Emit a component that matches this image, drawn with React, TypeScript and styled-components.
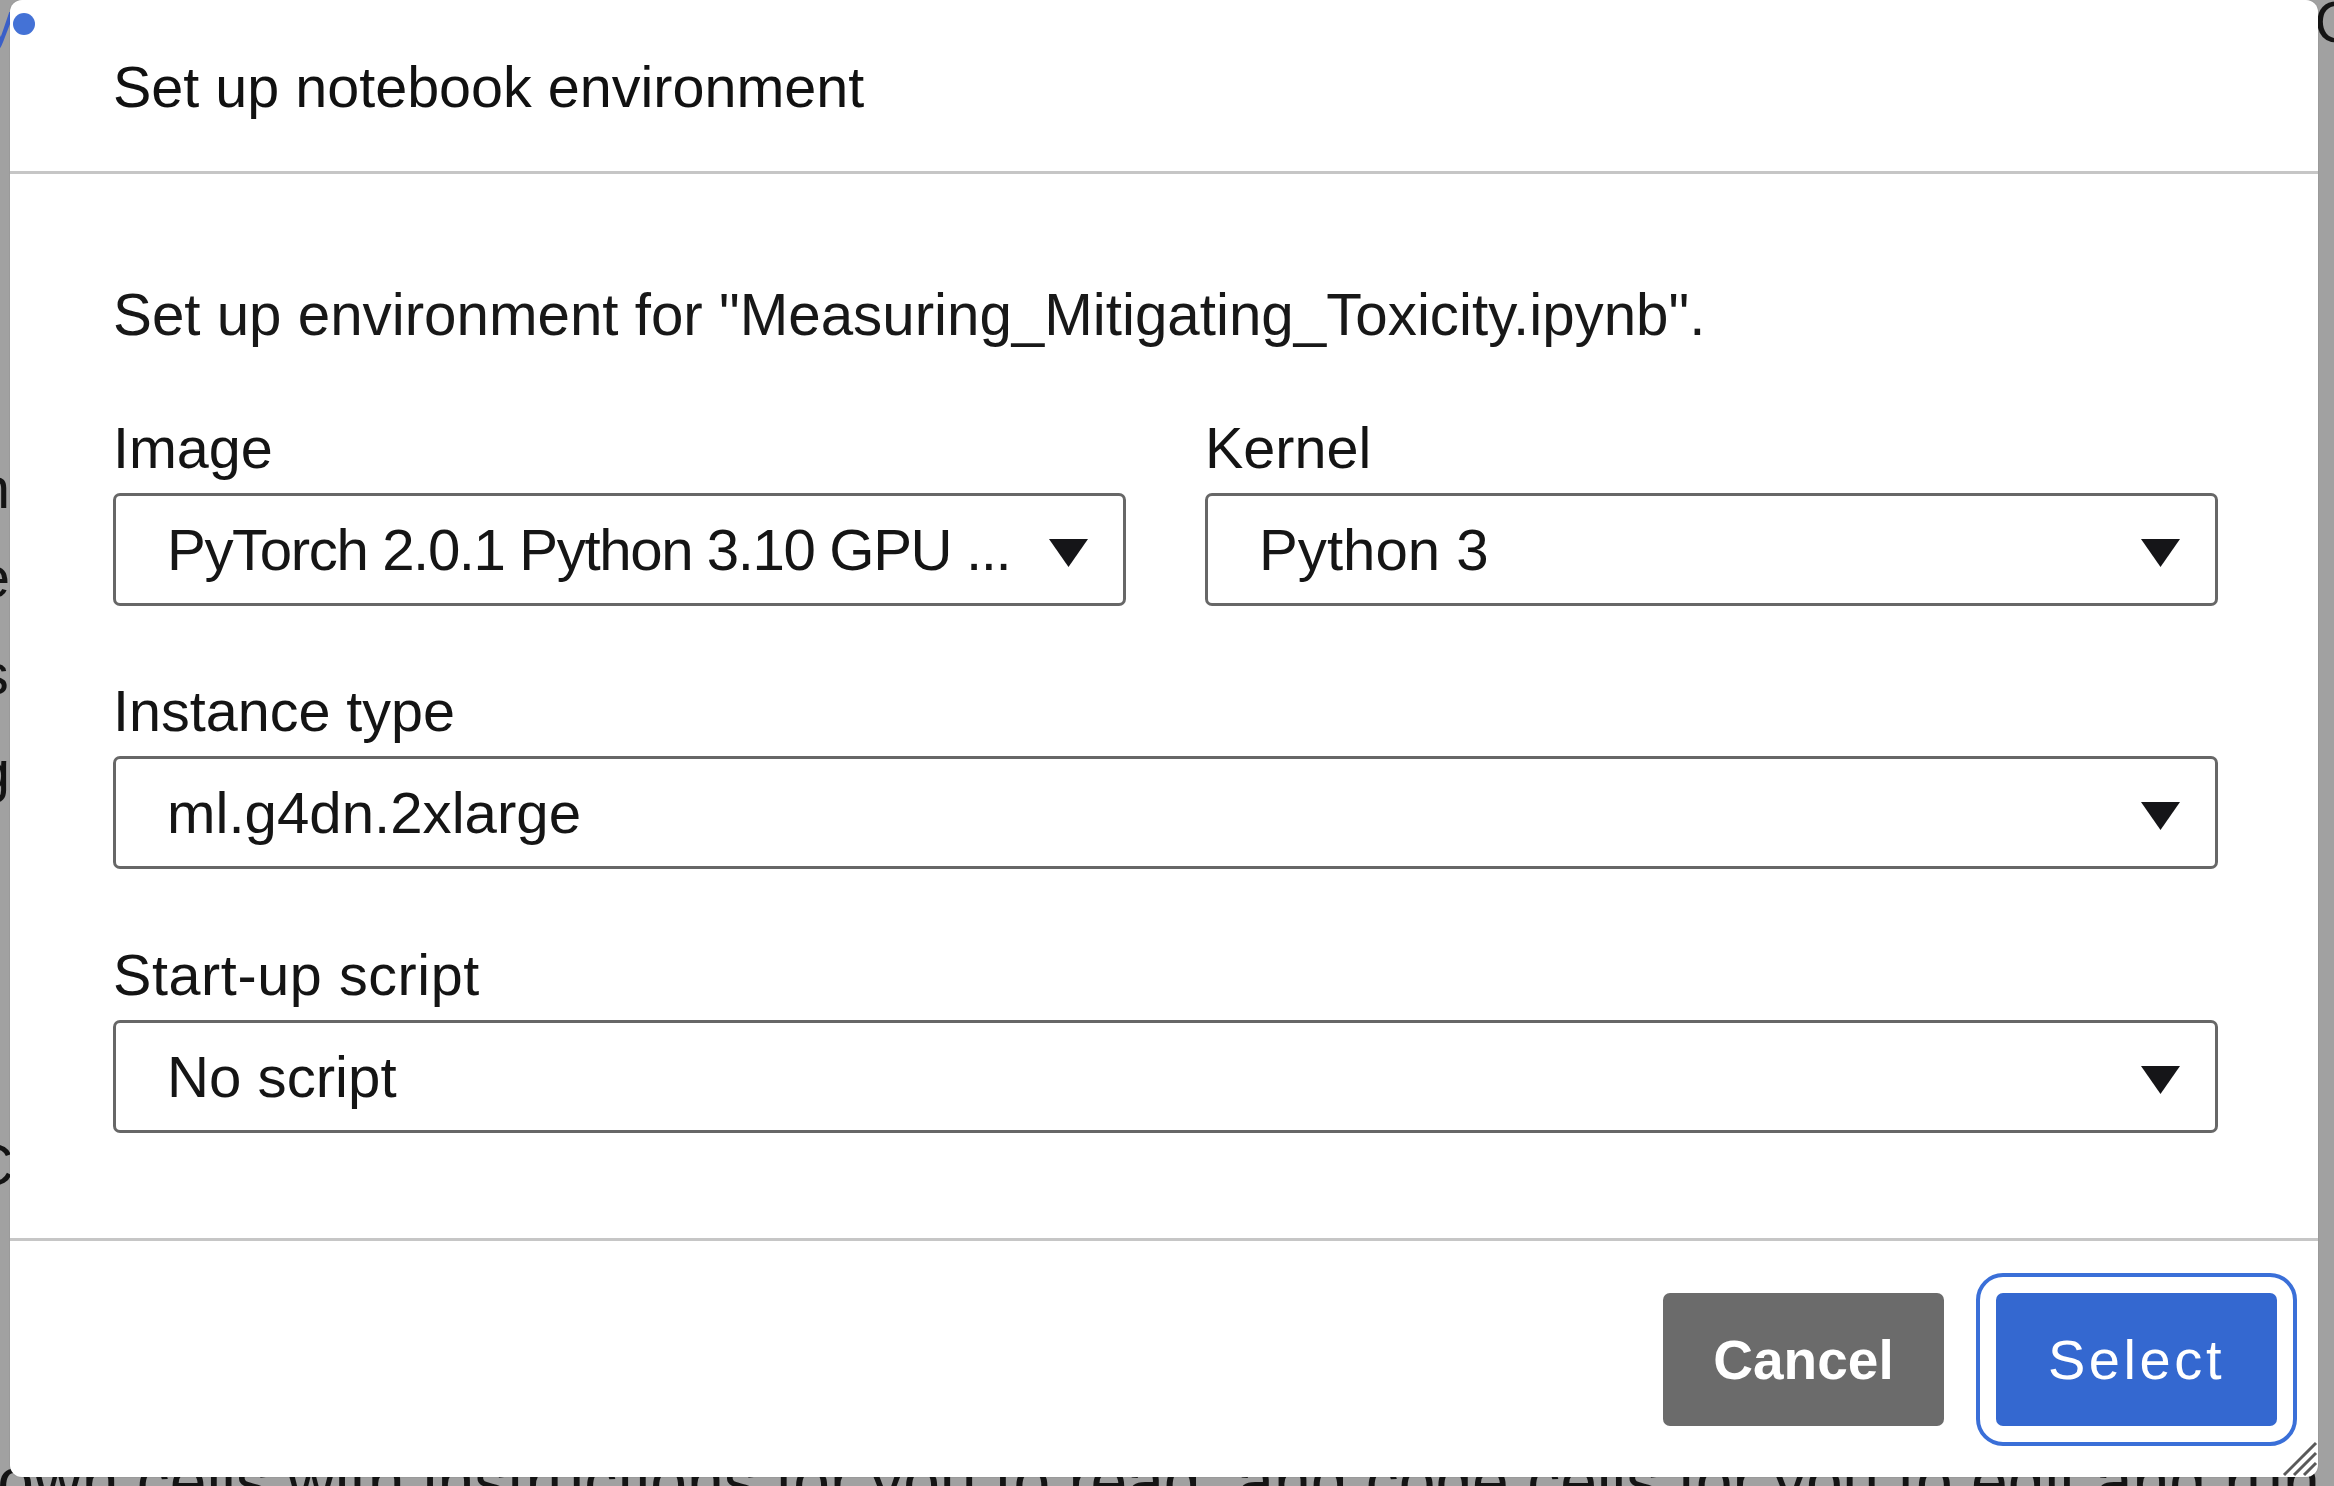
import React from "react";
import styled, { createGlobalStyle } from "styled-components";

const Global = createGlobalStyle`
  *, *::before, *::after { box-sizing: border-box; }
  html, body { margin: 0; padding: 0; overflow: hidden; }
  body { font-family: "Liberation Sans", Arial, "Noto Sans", sans-serif; }
`;

const Backdrop = styled.div`
  position: relative;
  width: 2334px;
  height: 1486px;
  overflow: hidden;
  background: #a1a1a1;
  font-family: "Liberation Sans", Arial, sans-serif;
`;

const BgPage = styled.div`
  display: flex;
  flex-direction: column;
  width: 100%;
`;

const BgLine = styled.div<{ $top: number; $shift: number; $size?: number; $between?: boolean }>`
  display: flex;
  justify-content: ${(p) => (p.$between ? "space-between" : "flex-start")};
  height: 69px;
  line-height: 69px;
  margin-top: ${(p) => p.$top}px;
  margin-left: ${(p) => p.$shift}px;
  font-size: ${(p) => p.$size || 57.5}px;
  color: #141414;
  white-space: nowrap;
`;

const BgLink = styled.span`
  color: #3a5fc8;
`;

const BgRight = styled.span`
  margin-right: -22px;
`;

const Dialog = styled.div`
  position: absolute;
  left: 10px;
  top: 0;
  width: 2308px;
  height: 1477px;
  background: #ffffff;
  border-radius: 12px;
  display: flex;
  flex-direction: column;
  color: #161616;
  box-shadow: 0 0 0 1px rgba(0, 0, 0, 0.04);
`;

const Header = styled.header`
  height: 174px;
  flex: none;
  display: flex;
  align-items: center;
  padding: 4px 100px 0 103px;
  border-bottom: 3px solid #c6c6c6;
`;

const Title = styled.h1`
  margin: 0;
  font-size: 57.5px;
  line-height: 69px;
  font-weight: 400;
  color: #111;
`;

const Body = styled.main`
  flex: 1;
  display: flex;
  flex-direction: column;
  padding: 106px 100px 0 103px;
`;

const Intro = styled.p`
  margin: 0;
  font-size: 58.3px;
  line-height: 69px;
  color: #181818;
`;

const Row = styled.div<{ $gap: number }>`
  display: grid;
  grid-template-columns: 1fr 1fr;
  column-gap: 79px;
  margin-top: ${(p) => p.$gap}px;
`;

const Field = styled.div<{ $gap?: number }>`
  display: flex;
  flex-direction: column;
  margin-top: ${(p) => p.$gap || 0}px;
`;

const Label = styled.label<{ $wide?: boolean }>`
  font-size: 57.5px;
  line-height: 69px;
  margin-bottom: 10px;
  color: #141414;
  letter-spacing: ${(p) => (p.$wide ? "0.6px" : "0")};
`;

const SelectBox = styled.div`
  height: 113px;
  border: 3px solid #676767;
  border-radius: 7px;
  display: flex;
  align-items: center;
  justify-content: space-between;
  padding: 0 35px 0 51px;
  background: #fff;
`;

const Value = styled.span<{ $tight?: boolean }>`
  font-size: 58.2px;
  line-height: 69px;
  color: #151515;
  white-space: nowrap;
  overflow: hidden;
  letter-spacing: ${(p) => (p.$tight ? "-1.4px" : "0")};
`;

const Arrow = styled.svg`
  flex: none;
  width: 39px;
  height: 28px;
  margin-top: 6px;
`;

const Footer = styled.footer`
  height: 239px;
  flex: none;
  display: flex;
  justify-content: flex-end;
  align-items: flex-start;
  gap: 52px;
  padding: 52px 41px 0 0;
  border-top: 3px solid #c6c6c6;
`;

const Button = styled.button<{ $primary?: boolean }>`
  width: 281px;
  height: 133px;
  border: none;
  border-radius: 7px;
  font-family: "Liberation Sans", Arial, sans-serif;
  font-size: ${(p) => (p.$primary ? "56px" : "55px")};
  font-weight: ${(p) => (p.$primary ? 400 : 700)};
  letter-spacing: ${(p) => (p.$primary ? "3.6px" : "0")};
  color: #fff;
  background: ${(p) => (p.$primary ? "#3468d0" : "#6b6b6b")};
  outline: ${(p) => (p.$primary ? "4px solid #3a6fd8" : "none")};
  outline-offset: 16px;
  cursor: pointer;
  padding: 0;
`;

const Handle = styled.svg`
  position: absolute;
  right: 0;
  bottom: 0;
  width: 40px;
  height: 40px;
`;

const Dot = styled.div`
  position: absolute;
  left: 13px;
  top: 13px;
  width: 22px;
  height: 22px;
  border-radius: 50%;
  background: #4472d6;
`;

const DownArrow = () => (
  <Arrow viewBox="0 0 39 28">
    <polygon points="0,0 39,0 19.5,28" fill="#151518" />
  </Arrow>
);

const Select = ({ value, tight }: { value: string; tight?: boolean }) => (
  <SelectBox>
    <Value $tight={tight}>{value}</Value>
    <DownArrow />
  </SelectBox>
);

const bgLines = [
  { top: -12, shift: -14, text: "", between: true },
  { top: 226, shift: -22, text: "r" },
  { top: 102, shift: -22, text: "n" },
  { top: 20, shift: -22, text: "e" },
  { top: 28, shift: -20, text: "s" },
  { top: 28, shift: -22, text: "g" },
  { top: 325, shift: -28, text: "C" },
  { top: 247, shift: -186, size: 66, text: "Markdown cells with instructions for you to read, and code cells for you to edit and run." },
];

export default function App() {
  return (
    <>
      <Global />
      <Backdrop>
        <BgPage>
          {bgLines.map((l, i) =>
            l.between ? (
              <BgLine key={i} $top={l.top} $shift={l.shift} $between>
                <BgLink>y</BgLink>
                <BgRight>C</BgRight>
              </BgLine>
            ) : (
              <BgLine key={i} $top={l.top} $shift={l.shift} $size={l.size}>
                {l.text}
              </BgLine>
            )
          )}
        </BgPage>
        <Dialog>
          <Header>
            <Title>Set up notebook environment</Title>
          </Header>
          <Body>
            <Intro>Set up environment for "Measuring_Mitigating_Toxicity.ipynb".</Intro>
            <Row $gap={65}>
              <Field>
                <Label>Image</Label>
                <Select value="PyTorch 2.0.1 Python 3.10 GPU ..." tight />
              </Field>
              <Field>
                <Label>Kernel</Label>
                <Select value="Python 3" />
              </Field>
            </Row>
            <Field $gap={71}>
              <Label>Instance type</Label>
              <Select value="ml.g4dn.2xlarge" />
            </Field>
            <Field $gap={72}>
              <Label $wide>Start-up script</Label>
              <Select value="No script" />
            </Field>
          </Body>
          <Footer>
            <Button>Cancel</Button>
            <Button $primary>Select</Button>
          </Footer>
          <Handle viewBox="0 0 40 40">
            <line x1="6" y1="38" x2="38" y2="6" stroke="#5a5a5a" strokeWidth="3" />
            <line x1="16" y1="38" x2="38" y2="16" stroke="#5a5a5a" strokeWidth="3" />
            <line x1="26" y1="38" x2="38" y2="26" stroke="#5a5a5a" strokeWidth="3" />
          </Handle>
        </Dialog>
        <Dot />
      </Backdrop>
    </>
  );
}
